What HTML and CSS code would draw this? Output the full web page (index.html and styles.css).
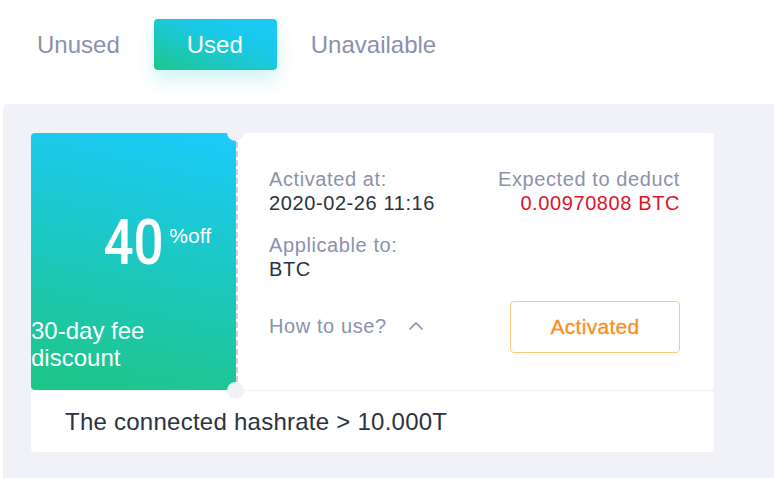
FILE: index.html
```html
<!DOCTYPE html>
<html>
<head>
<meta charset="utf-8">
<link rel="stylesheet" href="styles.css">
</head>
<body>
<div class="page">
  <nav class="tabs">
    <div class="tab">Unused</div>
    <div class="tab active">Used</div>
    <div class="tab">Unavailable</div>
  </nav>
  <section class="panel">
    <div class="coupon">
      <div class="coupon-left">
        <div class="rate"><span class="big">40</span><span class="off">%off</span></div>
        <div class="desc">30-day fee<br>discount</div>
      </div>
      <div class="coupon-right">
        <span class="notch notch-top"></span>
        <span class="notch notch-bottom"></span>
        <div class="row">
          <div class="field">
            <div class="label">Activated at:</div>
            <div class="value">2020-02-26 11:16</div>
          </div>
          <div class="field right">
            <div class="label">Expected to deduct</div>
            <div class="value red">0.00970808 BTC</div>
          </div>
        </div>
        <div class="field applicable">
          <div class="label">Applicable to:</div>
          <div class="value">BTC</div>
        </div>
        <div class="row actions">
          <div class="howto">How to use?
            <svg class="caret" width="16" height="10" viewBox="0 0 16 10"><path d="M1.5 8.5 L8 2 L14.5 8.5" fill="none" stroke="#8c91ad" stroke-width="1.6"/></svg>
          </div>
          <div class="btn">Activated</div>
        </div>
      </div>
    </div>
    <div class="condition">The connected hashrate &gt; 10.000T</div>
  </section>
</div>
</body>
</html>
```
FILE: styles.css
```css
html, body {
  margin: 0;
  padding: 0;
  background: #ffffff;
  overflow: hidden;
  font-family: "Liberation Sans", Arial, sans-serif;
}
.page {
  width: 774px;
  height: 478px;
  padding-top: 19px;
  padding-left: 3px;
  box-sizing: border-box;
  overflow: hidden;
}
.tabs {
  display: flex;
  height: 51px;
}
.tab {
  padding: 0 34px;
  line-height: 51px;
  font-size: 24px;
  color: #8b90ae;
  border-radius: 4px;
}
.tab.active {
  padding: 0 34px 0 33px;
  color: #ffffff;
  background: linear-gradient(to top right, #1dc68b 0%, #1ac9e6 60%, #1acbfb 100%);
  box-shadow: 0 10px 18px rgba(40, 205, 200, 0.22);
}
.panel {
  margin-top: 34px;
  width: 800px;
  height: 374px;
  background: #f1f2f7;
  border-radius: 4px 0 0 0;
  padding: 29px 0 0 28px;
  box-sizing: border-box;
}
.coupon {
  display: flex;
  width: 683px;
  height: 257px;
}
.coupon-left {
  width: 205px;
  flex: none;
  display: flex;
  flex-direction: column;
  background: linear-gradient(12deg, #1ec585 0%, #1cc8c0 50%, #1bcbfc 100%);
  border-radius: 4px 0 0 4px;
  color: #ffffff;
  padding: 78px 0 19px 0;
  box-sizing: border-box;
}
.rate {
  display: flex;
  justify-content: flex-end;
  align-items: flex-start;
  padding-right: 25px;
}
.big {
  display: inline-block;
  font-family: Roboto, "Liberation Sans", sans-serif;
  font-weight: 500;
  font-size: 63px;
  line-height: 63px;
  transform: scaleX(0.84);
  transform-origin: right center;
  margin-right: 6px;
}
.off {
  font-size: 21px;
  line-height: 21px;
  margin-top: 14px;
}
.desc {
  margin-top: auto;
  font-size: 24px;
  line-height: 27px;
}
.coupon-right {
  position: relative;
  flex: 1;
  background: #ffffff;
  border-radius: 0 4px 4px 0;
  padding: 34px 34px 0 33px;
  display: flex;
  flex-direction: column;
  background-image: repeating-linear-gradient(to bottom, #cfd2dc 0 6px, transparent 6px 9px);
  background-size: 2px 100%;
  background-repeat: no-repeat;
  background-position: 0 0;
}
.notch {
  position: absolute;
  left: -9px;
  width: 17px;
  height: 17px;
  border-radius: 50%;
  background: #f1f2f7;
}
.notch-top { top: -9px; }
.notch-bottom { bottom: -9px; }
.row {
  display: flex;
  justify-content: space-between;
}
.field .label,
.field .value {
  font-size: 20px;
  line-height: 24px;
  letter-spacing: 0.6px;
}
.label { color: #8c91ad; }
.value { color: #2b3241; }
.value.red { color: #e2112a; }
.field.right { text-align: right; }
.applicable { margin-top: 18px; }
.actions {
  margin-top: 20px;
  align-items: center;
}
.howto {
  display: flex;
  align-items: center;
  gap: 21px;
  font-size: 20px;
  letter-spacing: 0.6px;
  color: #8c91ad;
  margin-top: -1px;
}
.caret { display: block; margin-top: -2px; }
.btn {
  width: 170px;
  height: 52px;
  box-sizing: border-box;
  border: 1.5px solid #ffc777;
  border-radius: 4px;
  display: flex;
  align-items: center;
  justify-content: center;
  font-size: 21px;
  letter-spacing: 0.3px;
  color: #f7901d;
  -webkit-text-stroke: 0.3px #f7901d;
}
.condition {
  margin-top: 1px;
  width: 683px;
  height: 61px;
  box-sizing: border-box;
  background: #ffffff;
  border-radius: 4px;
  padding-left: 34px;
  display: flex;
  align-items: center;
  font-size: 24px;
  letter-spacing: 0.25px;
  color: #2b3241;
}
```
